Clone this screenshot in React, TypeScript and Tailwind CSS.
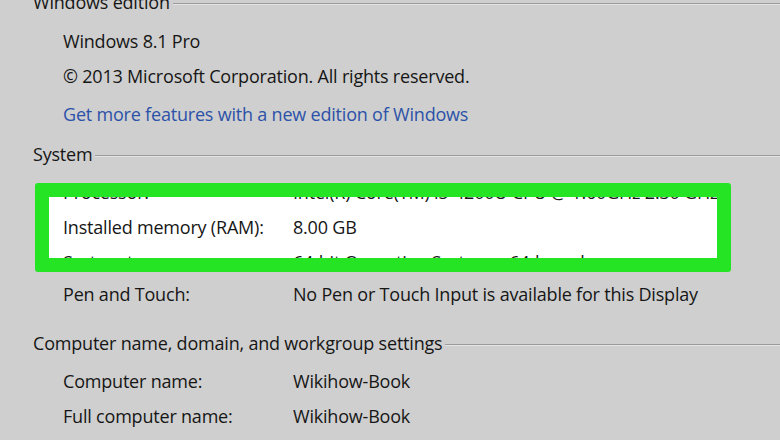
import React from 'react';

const font = { fontFamily: '"Open Sans", "Noto Sans", sans-serif' };

const Heading: React.FC<{ text: string; className?: string }> = ({ text, className = '' }) => (
  <div className={`flex h-[35px] items-center pl-[33px] ${className}`}>
    <span className="whitespace-nowrap">{text}</span>
    <div className="ml-[3px] mt-[3px] flex-1 border-t border-b border-t-[#9b9b9b] border-b-[#e4e4e4]" />
  </div>
);

const Row: React.FC<{ label: string; value: string; className?: string }> = ({ label, value, className = '' }) => (
  <div className={`flex h-[35px] items-center whitespace-nowrap ${className}`}>
    <span className="w-[230px] shrink-0">{label}</span>
    <span>{value}</span>
  </div>
);

export default function App() {
  return (
    <div
      className="h-[440px] w-[780px] overflow-hidden bg-[#cfcfcf] text-[18px] tracking-[-0.2px] text-[#161616]"
      style={font}
    >
      <Heading text="Windows edition" className="-mt-[15px]" />
      <div className="mt-[4px] pl-[63px]">
        <div className="flex h-[35px] items-center">Windows 8.1 Pro</div>
        <div className="flex h-[35px] items-center">© 2013 Microsoft Corporation. All rights reserved.</div>
        <div className="mt-[3px] flex h-[35px] items-center text-[#2b52a8]">
          Get more features with a new edition of Windows
        </div>
      </div>
      <Heading text="System" className="mt-[5px]" />

      <div className="ml-[35px] mt-[11px] w-[696px] rounded-[3px] border-[14px] border-[#24e424]">
        <div className="h-[61px] overflow-hidden bg-white pl-[14px]">
          <div className="-mt-[22px]">
            <Row label="Processor:" value="Intel(R) Core(TM) i5-4200U CPU @ 1.60GHz 2.30 GHz" />
            <Row label="Installed memory (RAM):" value="8.00 GB" />
            <Row label="System type:" value="64-bit Operating System, x64-based processor" />
          </div>
        </div>
      </div>

      <div className="mt-[5px] pl-[63px]">
        <Row label="Pen and Touch:" value="No Pen or Touch Input is available for this Display" />
      </div>
      <Heading text="Computer name, domain, and workgroup settings" className="mt-[14px]" />
      <div className="mt-[3px] pl-[63px]">
        <Row label="Computer name:" value="Wikihow-Book" />
        <Row label="Full computer name:" value="Wikihow-Book" />
      </div>
    </div>
  );
}
